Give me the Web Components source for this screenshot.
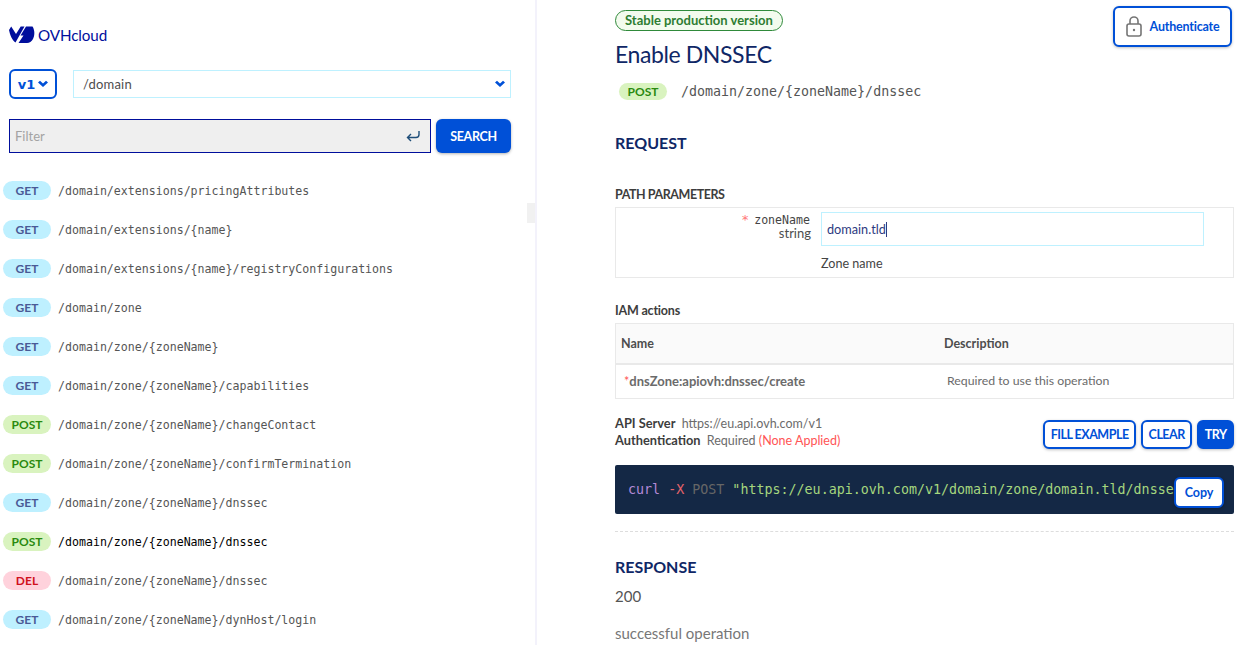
<!DOCTYPE html>
<html>
<head>
<meta charset="utf-8">
<title>OVHcloud API</title>
<style>
  html, body { margin: 0; height: 100%; overflow: hidden; background: #fff; }
  body { font-family: Lato, sans-serif; }
</style>
</head>
<body>
<api-app></api-app>

<script>
const SANS = 'Lato, "Noto Sans", sans-serif';
const MONO = '"DejaVu Sans Mono", monospace';

class ApiPill extends HTMLElement {
    constructor() {
        super();
        this.attachShadow({ mode: 'open' });
        this.shadowRoot.innerHTML = `
            <style>
                :host {
                    display: flex;
                    align-items: center;
                    justify-content: center;
                    width: 48px;
                    height: 19px;
                    border-radius: 10px;
                    font: 700 12px ${SANS};
                    flex-shrink: 0;
                }
                :host([method="GET"]) { background: #bef0ff; color: #4a5a96; }
                :host([method="POST"]) { background: #d9f3bf; color: #2a8a10; }
                :host([method="DEL"]) { background: #ffd2dc; color: #d0101c; }
            </style>
            <slot></slot>
        `;
    }
}
customElements.define('api-pill', ApiPill);

class ApiRow extends HTMLElement {
    constructor() {
        super();
        this.attachShadow({ mode: 'open' });
        this.shadowRoot.innerHTML = `
            <style>
                :host {
                    display: flex;
                    align-items: center;
                    gap: 7px;
                    height: 39px;
                    font: 11.6px ${MONO};
                    color: #555;
                }
                :host([active]) { color: #000; }
            </style>
            <api-pill method="${this.getAttribute('method')}">${this.getAttribute('method')}</api-pill>
            <span><slot></slot></span>
        `;
    }
}
customElements.define('api-row', ApiRow);

class ApiSidebar extends HTMLElement {
    constructor() {
        super();
        this.attachShadow({ mode: 'open' });
        const rows = [
            ['GET', '/domain/extensions/pricingAttributes'],
            ['GET', '/domain/extensions/{name}'],
            ['GET', '/domain/extensions/{name}/registryConfigurations'],
            ['GET', '/domain/zone'],
            ['GET', '/domain/zone/{zoneName}'],
            ['GET', '/domain/zone/{zoneName}/capabilities'],
            ['POST', '/domain/zone/{zoneName}/changeContact'],
            ['POST', '/domain/zone/{zoneName}/confirmTermination'],
            ['GET', '/domain/zone/{zoneName}/dnssec'],
            ['POST', '/domain/zone/{zoneName}/dnssec', true],
            ['DEL', '/domain/zone/{zoneName}/dnssec'],
            ['GET', '/domain/zone/{zoneName}/dynHost/login']
        ];
        this.shadowRoot.innerHTML = `
            <style>
                :host {
                    display: block;
                    position: relative;
                    width: 537px;
                    height: 645px;
                    box-sizing: border-box;
                    border-right: 2px solid #f3f2fb;
                    flex-shrink: 0;
                    overflow: hidden;
                    font-family: ${SANS};
                }
                .logo {
                    display: flex;
                    align-items: center;
                    gap: 3px;
                    height: 18px;
                    margin: 26px 0 0 9px;
                    color: #000e9c;
                    font-size: 15.2px;
                    letter-spacing: -0.1px;
                }
                .selects {
                    display: flex;
                    gap: 16px;
                    margin: 25px 0 0 9px;
                    width: 502px;
                }
                .version {
                    display: flex;
                    align-items: center;
                    justify-content: center;
                    gap: 3px;
                    width: 48px;
                    height: 30px;
                    box-sizing: border-box;
                    border: 2px solid #0050d7;
                    border-radius: 6px;
                    color: #0050d7;
                    font: 700 13px "DejaVu Sans", sans-serif;
                }
                .path {
                    flex: 1;
                    display: flex;
                    align-items: center;
                    justify-content: space-between;
                    height: 28px;
                    margin-top: 1px;
                    box-sizing: border-box;
                    border: 1px solid #bef1ff;
                    padding: 0 5px 0 9px;
                    font-size: 13px;
                    letter-spacing: 0.2px;
                    color: #4d4d4d;
                }
                .filter {
                    display: flex;
                    gap: 5px;
                    margin: 20px 0 0 9px;
                    width: 502px;
                }
                .input {
                    flex: 1;
                    display: flex;
                    align-items: center;
                    justify-content: space-between;
                    height: 34px;
                    box-sizing: border-box;
                    border: 1px solid #000e9c;
                    background: #efefef;
                    padding: 0 10px 0 5px;
                    font-size: 13px;
                    color: #a3a3a3;
                }
                .search {
                    display: flex;
                    align-items: center;
                    justify-content: center;
                    width: 75px;
                    height: 34px;
                    border-radius: 6px;
                    background: #0050d7;
                    color: #fff;
                    font-weight: 700;
                    font-size: 12.5px;
                    letter-spacing: -0.3px;
                    box-shadow: 0 1px 3px rgba(0, 0, 0, 0.3);
                }
                .list { margin: 18px 0 0 3px; }
                .thumb {
                    position: absolute;
                    right: 0;
                    top: 203px;
                    width: 8px;
                    height: 20px;
                    background: #f1f1f1;
                }
            </style>
            <div class="logo">
                <svg width="26" height="18" viewBox="0 0 26 18">
                    <path fill="#000e9c" d="M0 4 2.2 0.6 7 8 11.7 0.6H15.5L6.5 16.5C3 14 1 9 0 4Z"/>
                    <path fill="#000e9c" d="M17 0.6H23.5C25.8 4 26 9.5 24 13 22.5 15.5 20.5 17 18 17H9.5L14.5 9.5H11.5Z"/>
                </svg>
                <span>OVHcloud</span>
            </div>
            <div class="selects">
                <div class="version">v1 <svg width="10" height="8" viewBox="0 0 10 8"><path fill="#0050d7" d="M0 2.5 2 .8 5 3.5 8 .8l2 1.7L5 7Z"/></svg></div>
                <div class="path">/domain <svg width="10" height="8" viewBox="0 0 10 8"><path fill="#0050d7" d="M0 2.5 2 .8 5 3.5 8 .8l2 1.7L5 7Z"/></svg></div>
            </div>
            <div class="filter">
                <div class="input">Filter
                    <svg width="14" height="12" viewBox="0 0 14 12" fill="none" stroke="#1f4e79" stroke-width="1.4">
                        <path d="M13 1v3.5a3 3 0 0 1-3 3H1.5M5 4 1.5 7.5 5 11"/>
                    </svg>
                </div>
                <div class="search">SEARCH</div>
            </div>
            <div class="list">
                ${rows.map(r => `<api-row method="${r[0]}"${r[2] ? ' active' : ''}>${r[1]}</api-row>`).join('')}
            </div>
            <div class="thumb"></div>
        `;
    }
}
customElements.define('api-sidebar', ApiSidebar);

class ApiButton extends HTMLElement {
    constructor() {
        super();
        this.attachShadow({ mode: 'open' });
        this.shadowRoot.innerHTML = `
            <style>
                :host {
                    display: inline-flex;
                    align-items: center;
                    justify-content: center;
                    height: 29px;
                    padding: 0 5.5px;
                    box-sizing: border-box;
                    border: 2px solid #0050d7;
                    border-radius: 6px;
                    background: #fff;
                    color: #0050d7;
                    font: 700 12.5px ${SANS};
                    letter-spacing: -0.5px;
                    box-shadow: 0 1px 3px rgba(0, 0, 0, 0.25);
                }
                :host([primary]) { background: #0050d7; color: #fff; }
            </style>
            <slot></slot>
        `;
    }
}
customElements.define('api-button', ApiButton);

class ApiOperation extends HTMLElement {
    constructor() {
        super();
        this.attachShadow({ mode: 'open' });
        this.shadowRoot.innerHTML = `
            <style>
                :host {
                    display: block;
                    position: relative;
                    flex: 1;
                    height: 645px;
                    overflow: hidden;
                    padding-left: 78px;
                    padding-right: 6px;
                    font-family: ${SANS};
                    color: #4d4d4d;
                }
                .auth {
                    position: absolute;
                    right: 8px;
                    top: 6px;
                    width: 119px;
                    height: 41px;
                    gap: 8px;
                    letter-spacing: -0.2px;
                }
                .stable {
                    display: inline-block;
                    margin-top: 10px;
                    height: 21px;
                    line-height: 19px;
                    box-sizing: border-box;
                    border: 1px solid #2f8a3a;
                    border-radius: 11px;
                    background: #f3fbee;
                    color: #2e7d32;
                    padding: 0 9px;
                    font-size: 13px;
                    font-weight: 700;
                }
                h1 {
                    margin: 4px 0 0;
                    font-size: 23px;
                    letter-spacing: -0.4px;
                    line-height: 38px;
                    font-weight: 400;
                    color: #0f2766;
                }
                .endpoint {
                    display: flex;
                    align-items: center;
                    gap: 14px;
                    margin: 10px 0 0 4px;
                    font: 13.3px ${MONO};
                    color: #555;
                }
                .endpoint api-pill { height: 17px; }
                h2 {
                    margin: 0;
                    font-size: 16px;
                    line-height: 22px;
                    font-weight: 700;
                    color: #0f2766;
                }
                h3 {
                    margin: 0;
                    font-size: 12.5px;
                    line-height: 16px;
                    font-weight: 700;
                    color: #3d3d3d;
                }
                .request { margin-top: 32px; }
                .params-title { margin-top: 33px; letter-spacing: -0.45px; }
                .params {
                    display: grid;
                    grid-template-columns: 196px 1fr;
                    column-gap: 9px;
                    height: 71px;
                    box-sizing: border-box;
                    border: 1px solid #e9e9e9;
                    margin-top: 4px;
                    padding-top: 4px;
                }
                .param-name {
                    text-align: right;
                    font-size: 13px;
                    line-height: 13px;
                    padding: 1px 1px 0 0;
                }
                .param-name b { font: 11.6px ${MONO}; color: #444; margin-right: 1px; }
                .param-name i { color: #f77; font-style: normal; font-family: ${MONO}; margin-right: 5px; }
                .field {
                    display: flex;
                    align-items: center;
                    width: 383px;
                    height: 34px;
                    box-sizing: border-box;
                    border: 1px solid #bef1ff;
                    padding-left: 5px;
                    font-size: 12.7px;
                    color: #2d3a80;
                }
                .caret { width: 1px; height: 15px; background: #2d3a80; }
                .param-desc { font-size: 12.6px; margin-top: 10px; color: #444; }
                .iam-title { margin-top: 25px; letter-spacing: -0.2px; }
                .iam {
                    border: 1px solid #e9e9e9;
                    margin-top: 4px;
                    font-size: 12.5px;
                }
                .iam-head {
                    display: grid;
                    grid-template-columns: 323px 1fr;
                    box-sizing: border-box;
                    align-items: center;
                    padding: 0 0 1px 5px;
                    background: #fafafa;
                    border-bottom: 2px solid #e9e9e9;
                    font-weight: 700;
                    height: 41px;
                }
                .iam-row {
                    display: grid;
                    grid-template-columns: 322px 1fr;
                    height: 33px;
                    box-sizing: border-box;
                    align-items: center;
                    padding: 0 0 2px 8px;
                    color: #6b6b6b;
                }
                .iam-row b { font-size: 13px; }
                .iam-row span:last-child { font-size: 12.3px; padding-left: 1px; }
                .iam-row i { color: #f55; font-style: normal; }
                .server {
                    display: flex;
                    justify-content: space-between;
                    align-items: flex-end;
                    margin-top: 16px;
                    font-size: 12.5px;
                    line-height: 17px;
                }
                .server b { color: #3d3d3d; margin-right: 3px; font-size: 12.8px; }
                .server span { color: #6b6b6b; }
                .server em { color: #f55; font-style: normal; }
                .actions { display: flex; gap: 5px; }
                .code {
                    position: relative;
                    height: 49px;
                    margin-top: 16px;
                    border-radius: 2px;
                    background: #142845;
                    padding: 0 13px;
                    font: 13.33px/49px ${MONO};
                    white-space: nowrap;
                    color: #a5d67e;
                }
                .code .c { color: #b58ad8; }
                .code .x { color: #e5636a; }
                .code .p { color: #666; }
                .copy {
                    position: absolute;
                    right: 10px;
                    top: 12px;
                    width: 50px;
                    height: 31px;
                    letter-spacing: -0.1px;
                }
                .sep { border-top: 1px dashed #ddd; margin-top: 17px; }
                .response { margin-top: 24px; }
                .status { font-size: 15px; line-height: 20px; margin-top: 8px; color: #555; }
                .desc { font-size: 15px; line-height: 20px; margin-top: 17px; color: #777; }
            </style>
            <api-button class="auth">
                <svg width="16" height="21" viewBox="0 0 16 21" fill="none" stroke="#757575" stroke-width="1.6">
                    <rect x="1" y="8" width="14" height="12" rx="2"/>
                    <path d="M4 8V5a4 4 0 0 1 8 0v3"/>
                    <circle cx="8" cy="14" r="1.2" fill="#757575" stroke="none"/>
                </svg>
                <span>Authenticate</span>
            </api-button>
            <span class="stable">Stable production version</span>
            <h1>Enable DNSSEC</h1>
            <div class="endpoint"><api-pill method="POST">POST</api-pill><span>/domain/zone/{zoneName}/dnssec</span></div>
            <h2 class="request">REQUEST</h2>
            <h3 class="params-title">PATH PARAMETERS</h3>
            <div class="params">
                <div class="param-name"><i>*</i><b>zoneName</b><br>string</div>
                <div>
                    <div class="field">domain.tld<span class="caret"></span></div>
                    <div class="param-desc">Zone name</div>
                </div>
            </div>
            <h3 class="iam-title">IAM actions</h3>
            <div class="iam">
                <div class="iam-head"><span>Name</span><span>Description</span></div>
                <div class="iam-row"><span><i>*</i><b>dnsZone:apiovh:dnssec/create</b></span><span>Required to use this operation</span></div>
            </div>
            <div class="server">
                <div>
                    <div><b>API Server</b> <span>https://eu.api.ovh.com/v1</span></div>
                    <div><b>Authentication</b> <span>Required</span> <em>(None Applied)</em></div>
                </div>
                <div class="actions">
                    <api-button>FILL EXAMPLE</api-button>
                    <api-button>CLEAR</api-button>
                    <api-button primary>TRY</api-button>
                </div>
            </div>
            <div class="code"><span class="c">curl</span> <span class="x">-X</span> <span class="p">POST</span> "https://eu.api.ovh.com/v1/domain/zone/domain.tld/dnsse<api-button class="copy">Copy</api-button></div>
            <div class="sep"></div>
            <h2 class="response">RESPONSE</h2>
            <div class="status">200</div>
            <div class="desc">successful operation</div>
        `;
    }
}
customElements.define('api-operation', ApiOperation);

class ApiApp extends HTMLElement {
    constructor() {
        super();
        this.attachShadow({ mode: 'open' });
        this.shadowRoot.innerHTML = `
            <style>
                :host { display: flex; width: 1240px; height: 645px; overflow: hidden; }
            </style>
            <api-sidebar></api-sidebar>
            <api-operation></api-operation>
        `;
    }
}
customElements.define('api-app', ApiApp);
</script>
</body>
</html>
